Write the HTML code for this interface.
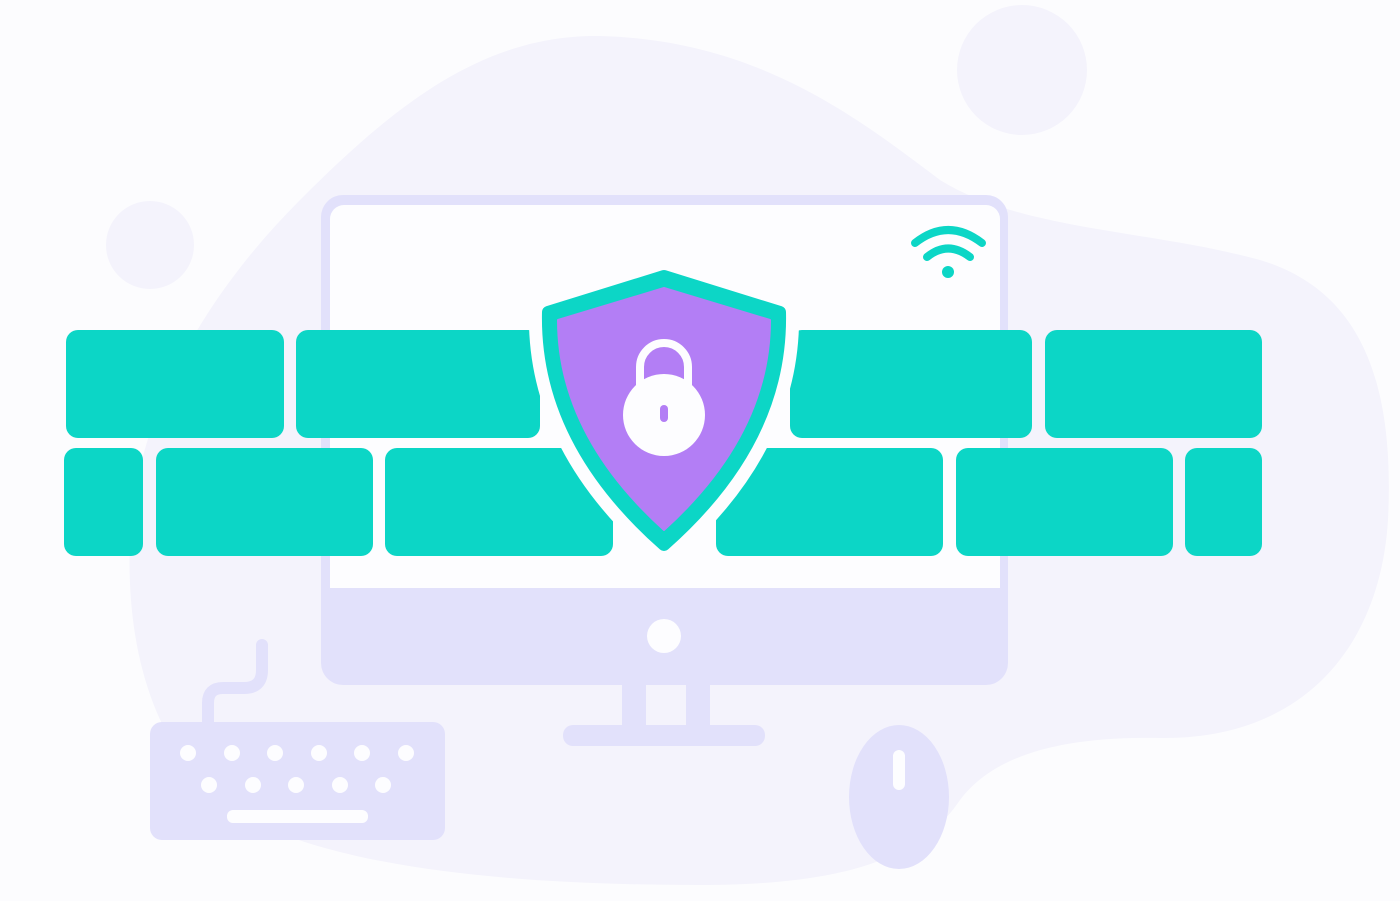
<!DOCTYPE html>
<html><head><meta charset="utf-8"><style>html,body{margin:0;padding:0;background:#fcfcfe;}svg{display:block}</style></head>
<body>
<svg width="1400" height="901" viewBox="0 0 1400 901" xmlns="http://www.w3.org/2000/svg">
<rect width="1400" height="901" fill="#fcfcfe"/>
<path d="M600 36 C760 40 860 120 940 180 C1020 230 1150 230 1260 260 C1360 290 1395 380 1388 520 C1380 650 1300 740 1160 738 C1050 736 990 760 960 800 C920 860 840 885 700 885 C520 885 350 870 250 820 C160 770 125 660 130 540 C135 420 200 300 300 200 C390 110 480 34 600 36 Z" fill="#f4f3fc"/>
<circle cx="150" cy="245" r="44" fill="#f4f3fc"/>
<circle cx="1022" cy="70" r="65" fill="#f4f3fc"/>
<!-- monitor -->
<rect x="321" y="195" width="687" height="490" rx="22" fill="#e2e1fb"/>
<rect x="330" y="205" width="670" height="383" rx="14" fill="#fdfdff"/>
<rect x="330" y="570" width="670" height="18" fill="#fdfdff"/>
<circle cx="664" cy="636" r="17" fill="#fdfdff"/>
<rect x="622" y="683" width="24" height="44" fill="#e2e1fb"/>
<rect x="686" y="683" width="24" height="44" fill="#e2e1fb"/>
<rect x="563" y="725" width="202" height="21" rx="10" fill="#e2e1fb"/>
<!-- keyboard -->
<path d="M262 645 V670 Q262 688 244 688 H223 Q208 688 208 703 V725" fill="none" stroke="#e2e1fb" stroke-width="12" stroke-linecap="round"/>
<rect x="150" y="722" width="295" height="118" rx="12" fill="#e2e1fb"/>
<g fill="#fdfdff">
<circle cx="188" cy="753" r="8"/><circle cx="232" cy="753" r="8"/><circle cx="275" cy="753" r="8"/><circle cx="319" cy="753" r="8"/><circle cx="362" cy="753" r="8"/><circle cx="406" cy="753" r="8"/>
<circle cx="209" cy="785" r="8"/><circle cx="253" cy="785" r="8"/><circle cx="296" cy="785" r="8"/><circle cx="340" cy="785" r="8"/><circle cx="383" cy="785" r="8"/>
<rect x="227" y="810" width="141" height="13" rx="6"/>
</g>
<!-- mouse -->
<ellipse cx="899" cy="797" rx="50" ry="72" fill="#e2e1fb"/>
<rect x="893" y="750" width="12" height="40" rx="6" fill="#fdfdff"/>
<!-- bricks -->
<g fill="#0cd6c6">
<rect x="66" y="330" width="218" height="108" rx="12"/>
<rect x="296" y="330" width="244" height="108" rx="12"/>
<rect x="790" y="330" width="242" height="108" rx="12"/>
<rect x="1045" y="330" width="217" height="108" rx="12"/>
<rect x="64" y="448" width="79" height="108" rx="12"/>
<rect x="156" y="448" width="217" height="108" rx="12"/>
<rect x="385" y="448" width="228" height="108" rx="12"/>
<rect x="716" y="448" width="227" height="108" rx="12"/>
<rect x="956" y="448" width="217" height="108" rx="12"/>
<rect x="1185" y="448" width="77" height="108" rx="12"/>
</g>
<!-- shield gap -->
<path d="M664 276 L548 312 Q545 440 664 545 Q783 440 780 312 Z" fill="#fdfdff" stroke="#fdfdff" stroke-width="38" stroke-linejoin="round"/>
<path d="M664 276 L548 312 Q545 440 664 545 Q783 440 780 312 Z" fill="#0cd6c6" stroke="#0cd6c6" stroke-width="12" stroke-linejoin="round"/>
<path d="M664 288 L558 320 Q558 434 664 530 Q770 434 770 320 Z" fill="#b37ef5" stroke="#b37ef5" stroke-width="2" stroke-linejoin="round"/>
<!-- lock -->
<path d="M640 385 V367 A24 24 0 0 1 688 367 V385" fill="none" stroke="#fdfdff" stroke-width="8"/>
<circle cx="664" cy="415" r="41" fill="#fdfdff"/>
<rect x="660" y="405" width="8" height="17" rx="4" fill="#b37ef5"/>
<!-- wifi -->
<g fill="none" stroke="#0cd6c6" stroke-width="8" stroke-linecap="round">
<path d="M915 243 Q948 217 982 243"/>
<path d="M927 257 Q948 240 970 257"/>
</g>
<circle cx="948" cy="272" r="6" fill="#0cd6c6"/>
</svg>
</body></html>
